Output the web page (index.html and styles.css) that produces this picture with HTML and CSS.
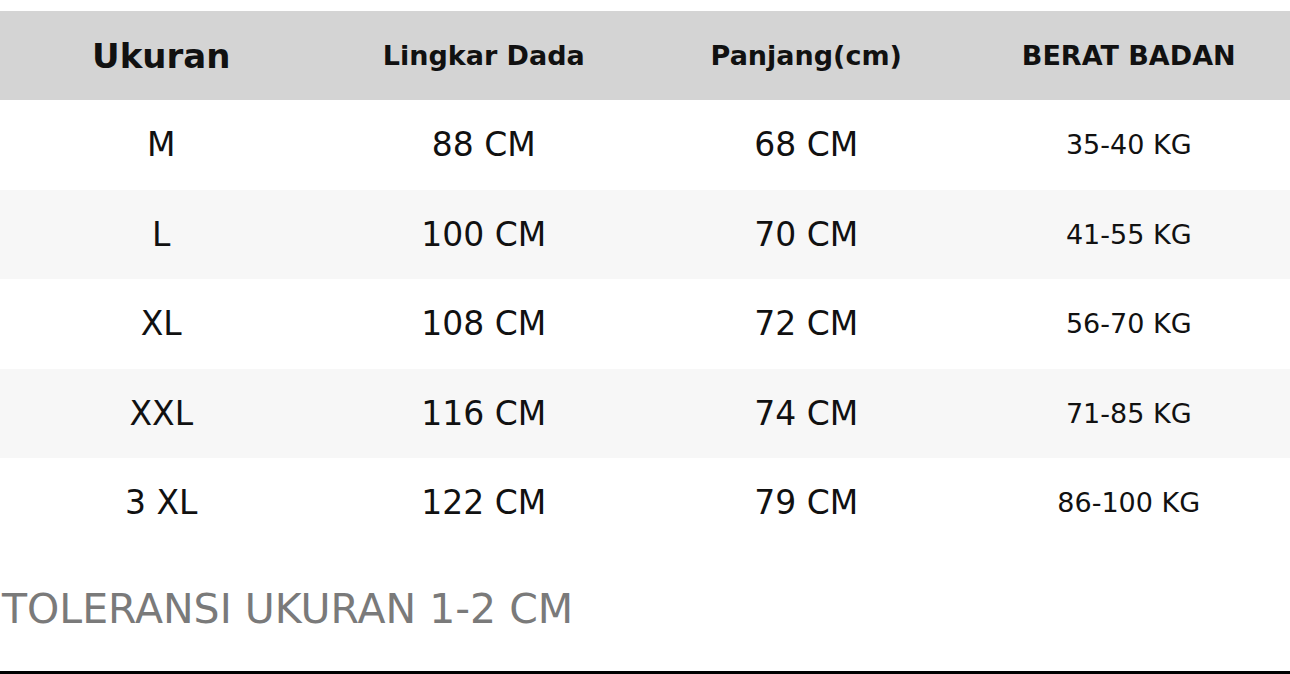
FILE: index.html
```html
<!DOCTYPE html>
<html>
<head>
<meta charset="utf-8">
<link rel="stylesheet" href="styles.css">
</head>
<body>
<div class="page">
  <div class="table">
    <div class="row head">
      <div class="cell h-main">Ukuran</div>
      <div class="cell">Lingkar Dada</div>
      <div class="cell">Panjang(cm)</div>
      <div class="cell">BERAT BADAN</div>
    </div>
    <div class="row">
      <div class="cell">M</div>
      <div class="cell">88 CM</div>
      <div class="cell">68 CM</div>
      <div class="cell kg">35-40 KG</div>
    </div>
    <div class="row alt">
      <div class="cell">L</div>
      <div class="cell">100 CM</div>
      <div class="cell">70 CM</div>
      <div class="cell kg">41-55 KG</div>
    </div>
    <div class="row">
      <div class="cell">XL</div>
      <div class="cell">108 CM</div>
      <div class="cell">72 CM</div>
      <div class="cell kg">56-70 KG</div>
    </div>
    <div class="row alt">
      <div class="cell">XXL</div>
      <div class="cell">116 CM</div>
      <div class="cell">74 CM</div>
      <div class="cell kg">71-85 KG</div>
    </div>
    <div class="row">
      <div class="cell">3 XL</div>
      <div class="cell">122 CM</div>
      <div class="cell">79 CM</div>
      <div class="cell kg">86-100 KG</div>
    </div>
  </div>
  <div class="note">TOLERANSI UKURAN 1-2 CM</div>
  <div class="rule"></div>
</div>
</body>
</html>
```

FILE: styles.css
```css
html, body {
  margin: 0;
  padding: 0;
  background: #ffffff;
}
.page {
  width: 1290px;
  height: 674px;
  display: flex;
  flex-direction: column;
  padding-top: 11px;
  box-sizing: border-box;
  font-family: "DejaVu Sans", Verdana, sans-serif;
  color: #111111;
  overflow: hidden;
}
.table {
  display: flex;
  flex-direction: column;
}
.row {
  display: grid;
  grid-template-columns: repeat(4, 1fr);
  height: 89.5px;
  background: #ffffff;
}
.row.alt {
  background: #f7f7f7;
}
.row.head {
  background: #d4d4d4;
  height: 89px;
  font-weight: bold;
  font-size: 27px;
  color: #111111;
}
.cell {
  display: flex;
  align-items: center;
  justify-content: center;
  font-size: 33px;
  line-height: 1;
}
.row.head .cell {
  font-size: 27px;
}
.row.head .cell.h-main {
  font-size: 34px;
}
.cell.kg {
  font-size: 27px;
}
.note {
  flex: 1;
  display: flex;
  align-items: center;
  font-size: 41px;
  line-height: 1;
  color: #7a7a7a;
  padding-left: 2px;
}
.rule {
  height: 3px;
  background: #000000;
}
```
